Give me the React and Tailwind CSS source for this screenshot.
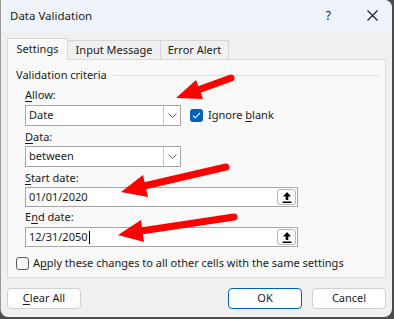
import React from "react";

const Chevron = () => (
  <svg width="9" height="5" viewBox="0 0 9 5" fill="none">
    <path d="M0.5 0.5 L4.5 4.5 L8.5 0.5" stroke="#606060" strokeWidth="1" />
  </svg>
);

const UpArrow = () => (
  <svg width="10" height="12" viewBox="0 0 10 12">
    <path d="M5 1 L9 5.5 L6.3 5.5 L6.3 9 L3.7 9 L3.7 5.5 L1 5.5 Z" fill="#000" />
    <rect x="0.5" y="10.5" width="9" height="1.5" fill="#000" />
  </svg>
);

const Combo = ({ value }) => (
  <div className="flex h-[21px] w-[156px] border border-[#a6a6a6] bg-white">
    <div className="flex flex-1 items-center pl-[3px]">{value}</div>
    <div className="flex w-[17px] items-center justify-center border-l border-[#c8c8c8]">
      <Chevron />
    </div>
  </div>
);

const RangeInput = ({ value, caret }) => (
  <div className="flex h-[20px] w-[273px] items-center border border-[#a6a6a6] bg-white">
    <div className="flex flex-1 items-center pl-[3px]">
      {value}
      {caret && <span className="ml-[1px] h-[13px] w-px bg-black" />}
    </div>
    <div className="mr-[1px] flex h-[16px] w-[19px] items-center justify-center rounded-[3px] border border-[#b8b8b8] bg-white">
      <UpArrow />
    </div>
  </div>
);

const Label = ({ pre, u, post, className = "" }) => (
  <div className={`h-[16px] leading-[16px] ${className}`}>
    {pre}
    <span className="underline underline-offset-2">{u}</span>
    {post}
  </div>
);

const Arrows = () => (
  <svg className="pointer-events-none absolute left-0 top-0" width="392" height="317">
    <g stroke="#ff0000" strokeWidth="7" strokeLinecap="round" fill="#ff0000">
      <line x1="230" y1="78" x2="197" y2="90" />
      <line x1="225" y1="167" x2="143" y2="186" />
      <line x1="233" y1="217" x2="140" y2="231" />
    </g>
    <g fill="#ff0000">
      <polygon points="175,98 195,80 202,99" />
      <polygon points="120,192 142,175 147,197" />
      <polygon points="117,235 140,220 143,242" />
    </g>
  </svg>
);

export default function App() {
  return (
    <div className="h-[319px] w-[394px] bg-[#4b4b4b] font-['Noto_Sans','Open_Sans',sans-serif] text-[11px] text-[#1a1a1a]">
      <div className="relative h-[317px] w-[392px] overflow-hidden rounded-r-[8px] rounded-bl-[8px] border-l border-[#9a9a9a] bg-[#f0f0f0]">
        <div className="flex h-[31px] items-center justify-between bg-[#eef3f9] pl-[9px] pr-[14px]">
          <span className="text-[11.5px]">Data Validation</span>
          <div className="flex items-center gap-[36px]">
            <span className="text-[12px]">?</span>
            <svg width="11" height="11" viewBox="0 0 11 11">
              <path d="M0.5 0.5 L10.5 10.5 M10.5 0.5 L0.5 10.5" stroke="#1a1a1a" strokeWidth="1.1" />
            </svg>
          </div>
        </div>

        <div className="px-[6px] pt-[7px]">
          <div className="flex h-[21px] items-end">
            <div className="relative z-10 -mb-px flex h-[22px] w-[61px] items-center justify-center border border-b-0 border-[#d6d6d6] bg-[#f9f9f9]">
              Settings
            </div>
            <div className="flex h-[19px] w-[93px] items-center justify-center border border-b-0 border-l-0 border-[#d6d6d6] bg-[#f0f0f0]">
              Input Message
            </div>
            <div className="flex h-[19px] w-[68px] items-center justify-center border border-b-0 border-l-0 border-[#d6d6d6] bg-[#f0f0f0]">
              Error Alert
            </div>
          </div>

          <div className="h-[219px] w-[379px] border border-[#d9d9d9] bg-[#f9f9f9] pl-[8px]">
            <div className="mt-[7px] flex h-[16px] items-center gap-[6px] pr-[6px] leading-[16px]">
              <span>Validation criteria</span>
              <div className="h-px flex-1 bg-[#dcdcdc]" />
            </div>

            <div className="pl-[9px]">
              <Label className="mt-[4px]" u="A" post="llow:" />
              <div className="mt-[2px] flex items-center gap-[9px]">
                <Combo value="Date" />
                <div className="flex items-center gap-[5px]">
                  <div className="flex h-[13px] w-[13px] items-center justify-center rounded-[3px] bg-[#005fb8]">
                    <svg width="9" height="7" viewBox="0 0 9 7">
                      <path d="M1 3.6 L3.3 5.8 L8 1" stroke="#fff" strokeWidth="1.1" fill="none" />
                    </svg>
                  </div>
                  <span>
                    Ignore <span className="underline underline-offset-2">b</span>lank
                  </span>
                </div>
              </div>

              <Label className="mt-[3px]" u="D" post="ata:" />
              <div className="mt-px">
                <Combo value="between" />
              </div>

              <Label className="mt-[3px]" u="S" post="tart date:" />
              <div className="mt-px">
                <RangeInput value="01/01/2020" />
              </div>

              <Label className="mt-[2px]" pre="E" u="n" post="d date:" />
              <div className="mt-[2px]">
                <RangeInput value="12/31/2050" caret />
              </div>
            </div>

            <div className="mt-[8px] flex items-center gap-[4px]">
              <div className="h-[13px] w-[13px] rounded-[3px] border border-[#5a5a5a] bg-[#f9f9f9]" />
              <Label pre="A" u="p" post="ply these changes to all other cells with the same settings" />
            </div>
          </div>

          <div className="mt-[10px] flex items-center">
            <button className="h-[21px] w-[74px] rounded-[4px] border border-[#d0d0d0] bg-white">
              <span className="underline underline-offset-2">C</span>lear All
            </button>
            <div className="flex-1" />
            <button className="h-[21px] w-[74px] rounded-[4px] border border-[#005fb8] bg-white">OK</button>
            <button className="ml-[10px] h-[21px] w-[74px] rounded-[4px] border border-[#d0d0d0] bg-white">Cancel</button>
          </div>
        </div>

        <Arrows />
      </div>
    </div>
  );
}
